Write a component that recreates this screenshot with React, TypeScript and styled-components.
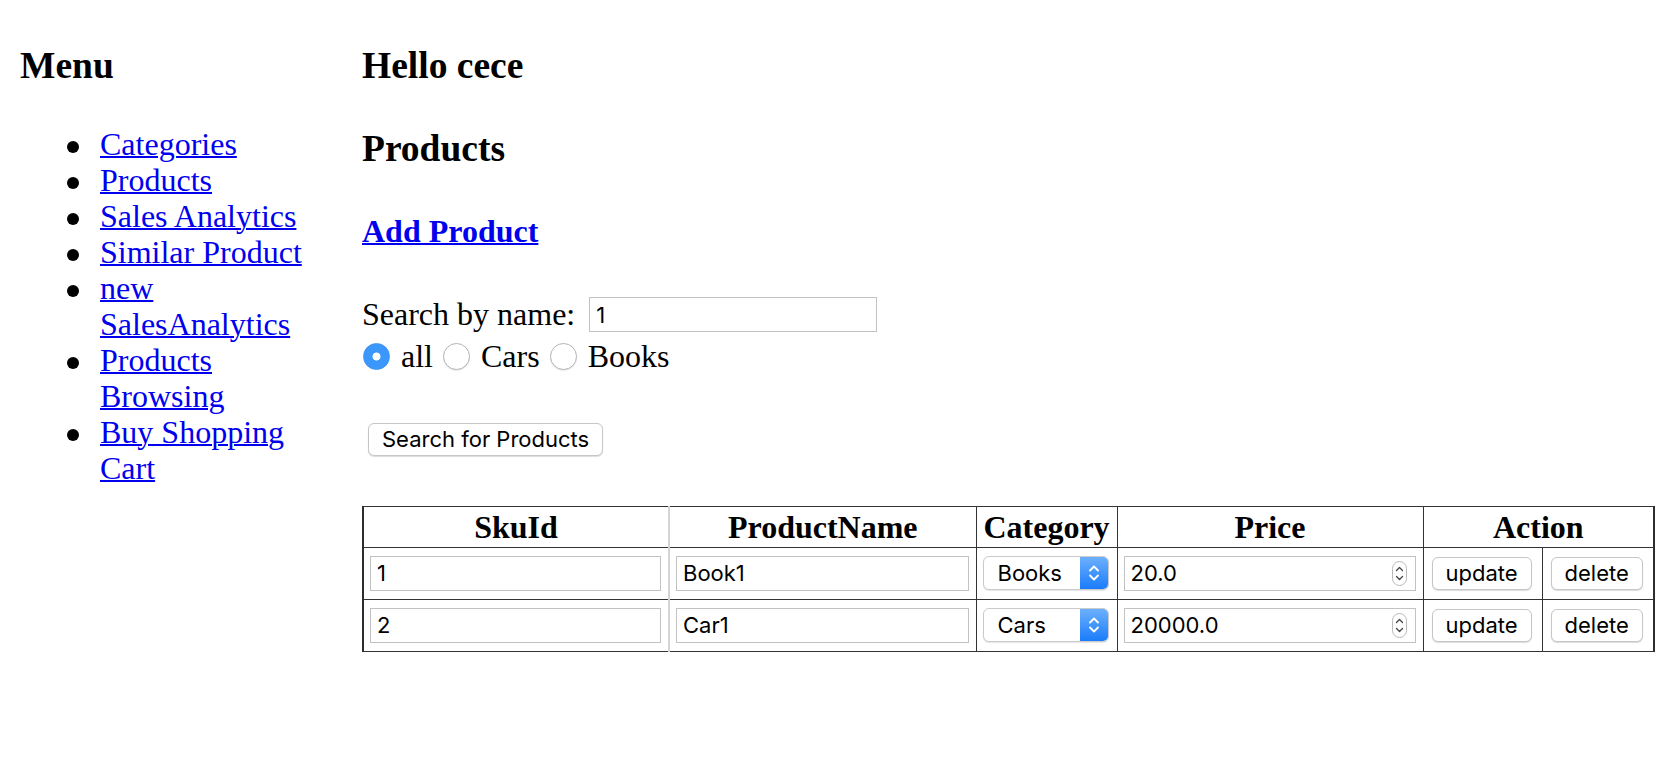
import React from 'react'
import styled, { createGlobalStyle } from 'styled-components'

const GlobalStyle = createGlobalStyle`
  body {
    margin: 0;
    background: #fff;
    color: #000;
    font-family: "Liberation Serif", "Times New Roman", serif;
  }
`

const controlFont = `font-family: Inter, "Liberation Sans", Arial, sans-serif; font-size: 22px;`

const Page = styled.div`
  display: flex;
  align-items: flex-start;
  padding: 0 12px 0 20px;
`

const Sidebar = styled.nav`
  flex: none;
  width: 300px;
`

const Main = styled.main`
  flex: 1;
  min-width: 0;
  margin-left: 42px;
`

const Heading = styled.h3<{ $top: number }>`
  margin: ${({ $top }) => $top}px 0 0;
  font-size: 37.5px;
  line-height: 44px;
  font-weight: bold;
`

const SubHeading = styled.h4`
  margin: 41.5px 0 0;
  font-size: 32px;
  line-height: 36px;
  font-weight: bold;
`

const Link = styled.a`
  color: #0000ee;
  text-decoration: underline;
  text-decoration-thickness: 2px;
  cursor: pointer;
`

const MenuList = styled.ul`
  margin: 38px 0 0;
  padding-left: 80px;
  list-style: none;
  font-size: 32px;
  line-height: 36px;
`

const MenuItem = styled.li`
  &::before {
    content: '';
    display: inline-block;
    width: 12px;
    height: 12px;
    margin: -2px 21px 0 -33px;
    border-radius: 50%;
    background: #000;
    vertical-align: middle;
  }
`

const SearchForm = styled.form`
  margin-top: 45px;
  font-size: 32px;
`

const FormRow = styled.div`
  display: flex;
  align-items: center;
  height: 42px;
`

const TextInput = styled.input<{ $width?: string }>`
  box-sizing: border-box;
  width: ${({ $width }) => $width || '100%'};
  height: 35px;
  margin: 0;
  padding: 0 6px;
  border: 1px solid #c2c2c2;
  background: #fff;
  color: #000;
  ${controlFont}
  outline: none;
`

const SearchInput = styled(TextInput)`
  margin-left: 14px;
`

const RadioLabel = styled.label<{ $first?: boolean }>`
  display: inline-flex;
  align-items: center;
  margin-left: ${({ $first }) => ($first ? '1px' : '10px')};
`

const Radio = styled.input.attrs({ type: 'radio' })`
  appearance: none;
  box-sizing: border-box;
  width: 27px;
  height: 27px;
  margin: 0 11px 0 0;
  border-radius: 50%;
  border: 1px solid #b3b3b3;
  background: #fff;
  box-shadow: 0 1px 1px rgba(0, 0, 0, 0.08);

  &:checked {
    border-color: #3b92f6;
    background: radial-gradient(circle, #fff 0 3.6px, #3c97fb 4.4px);
    box-shadow: none;
  }
`

const Button = styled.button`
  box-sizing: border-box;
  height: 33px;
  padding: 0 13px;
  border: 1px solid #c6c6c6;
  border-radius: 6px;
  background: #fff;
  box-shadow: 0 1px 1px rgba(0, 0, 0, 0.14);
  color: #000;
  ${controlFont}
  line-height: 31px;
  cursor: pointer;
`

const SearchButton = styled(Button)`
  display: block;
  margin: 45px 0 0 6px;
  padding: 0 13px;
`

const Table = styled.table`
  margin-top: 50px;
  width: 1291px;
  table-layout: fixed;
  border-collapse: collapse;
  border: 1px solid #2e2e2e;
  border-left-width: 2px;
  border-right-width: 2px;
`

const HeadCell = styled.th<{ $soft?: boolean }>`
  padding: 2px;
  border: 1px solid #333;
  ${({ $soft }) => ($soft ? 'border-left: 2px solid #d4d4d4;' : '')}
  font-size: 32px;
  line-height: 36px;
  font-weight: bold;
  text-align: center;
`

const Cell = styled.td<{ $soft?: boolean; $pad?: string }>`
  padding: ${({ $pad }) => $pad || '8px 7px 8px 6px'};
  border: 1px solid #333;
  ${({ $soft }) => ($soft ? 'border-left: 2px solid #d4d4d4;' : '')}
  vertical-align: middle;
`

const SelectBox = styled.div`
  box-sizing: border-box;
  display: flex;
  width: 126px;
  height: 34px;
  border: 1px solid #cacaca;
  border-radius: 6px;
  overflow: hidden;
  background: #fff;
  box-shadow: 0 1px 1px rgba(0, 0, 0, 0.1);
`

const SelectField = styled.select`
  flex: 1;
  min-width: 0;
  appearance: none;
  border: 0;
  margin: 0;
  padding: 0 0 0 14px;
  background: transparent;
  color: #000;
  ${controlFont}
  outline: none;
`

const SelectCap = styled.span`
  flex: none;
  width: 28px;
  display: flex;
  align-items: center;
  justify-content: center;
  background: linear-gradient(#6cb0fd, #1a7cfa);
`

const NumberBox = styled.div`
  box-sizing: border-box;
  display: flex;
  align-items: center;
  height: 35px;
  padding: 0 8px 0 6px;
  border: 1px solid #c2c2c2;
  background: #fff;
`

const NumberField = styled.input`
  flex: 1;
  min-width: 0;
  border: 0;
  margin: 0;
  padding: 0;
  background: transparent;
  color: #000;
  ${controlFont}
  outline: none;
`

const Col = styled.col<{ $w: number }>`
  width: ${({ $w }) => $w}px;
`

const menu = [
  'Categories',
  'Products',
  'Sales Analytics',
  'Similar Product',
  'new SalesAnalytics',
  'Products Browsing',
  'Buy Shopping Cart',
]

const products = [
  { sku: '1', name: 'Book1', category: 'Books', price: '20.0' },
  { sku: '2', name: 'Car1', category: 'Cars', price: '20000.0' },
]

const UpDown = () => (
  <svg width="12" height="20" viewBox="0 0 12 20" fill="none">
    <path d="M2 7.5 6 3.5 10 7.5" stroke="#fff" strokeWidth="1.8" strokeLinecap="round" strokeLinejoin="round" />
    <path d="M2 12.5 6 16.5 10 12.5" stroke="#fff" strokeWidth="1.8" strokeLinecap="round" strokeLinejoin="round" />
  </svg>
)

const Spinner = () => (
  <svg width="15" height="25" viewBox="0 0 15 25" fill="none">
    <rect x="0.5" y="0.5" width="14" height="24" rx="7" fill="#fff" stroke="#b9b9b9" />
    <path d="M4.5 9.5 7.5 6.5 10.5 9.5" stroke="#444" strokeWidth="1.3" strokeLinecap="round" strokeLinejoin="round" />
    <path d="M4.5 15.5 7.5 18.5 10.5 15.5" stroke="#444" strokeWidth="1.3" strokeLinecap="round" strokeLinejoin="round" />
  </svg>
)

export default function App() {
  return (
    <>
      <GlobalStyle />
      <Page>
        <Sidebar>
          <Heading $top={44}>Menu</Heading>
          <MenuList>
            {menu.map((item) => (
              <MenuItem key={item}>
                <Link>{item}</Link>
              </MenuItem>
            ))}
          </MenuList>
        </Sidebar>

        <Main>
          <Heading $top={44}>Hello cece</Heading>
          <Heading $top={39}>Products</Heading>
          <SubHeading>
            <Link>Add Product</Link>
          </SubHeading>

          <SearchForm onSubmit={(e) => e.preventDefault()}>
            <FormRow>
              <span>Search by name:</span>
              <SearchInput $width="288px" defaultValue="1" />
            </FormRow>
            <FormRow>
              <RadioLabel $first>
                <Radio name="cat" defaultChecked />
                all
              </RadioLabel>
              <RadioLabel>
                <Radio name="cat" />
                Cars
              </RadioLabel>
              <RadioLabel>
                <Radio name="cat" />
                Books
              </RadioLabel>
            </FormRow>
            <SearchButton type="submit">Search for Products</SearchButton>
          </SearchForm>

          <Table>
            <colgroup>
              <Col $w={306} />
              <Col $w={307} />
              <Col $w={141} />
              <Col $w={306} />
              <Col $w={119} />
              <Col $w={112} />
            </colgroup>
            <thead>
              <tr>
                <HeadCell>SkuId</HeadCell>
                <HeadCell $soft>ProductName</HeadCell>
                <HeadCell>Category</HeadCell>
                <HeadCell>Price</HeadCell>
                <HeadCell colSpan={2}>Action</HeadCell>
              </tr>
            </thead>
            <tbody>
              {products.map((p) => (
                <tr key={p.sku}>
                  <Cell>
                    <TextInput defaultValue={p.sku} />
                  </Cell>
                  <Cell $soft>
                    <TextInput defaultValue={p.name} />
                  </Cell>
                  <Cell>
                    <SelectBox>
                      <SelectField defaultValue={p.category}>
                        <option>Books</option>
                        <option>Cars</option>
                      </SelectField>
                      <SelectCap>
                        <UpDown />
                      </SelectCap>
                    </SelectBox>
                  </Cell>
                  <Cell>
                    <NumberBox>
                      <NumberField defaultValue={p.price} />
                      <Spinner />
                    </NumberBox>
                  </Cell>
                  <Cell $pad="8px 6px 8px 8px">
                    <Button>update</Button>
                  </Cell>
                  <Cell $pad="8px 6px 8px 8px">
                    <Button>delete</Button>
                  </Cell>
                </tr>
              ))}
            </tbody>
          </Table>
        </Main>
      </Page>
    </>
  )
}
